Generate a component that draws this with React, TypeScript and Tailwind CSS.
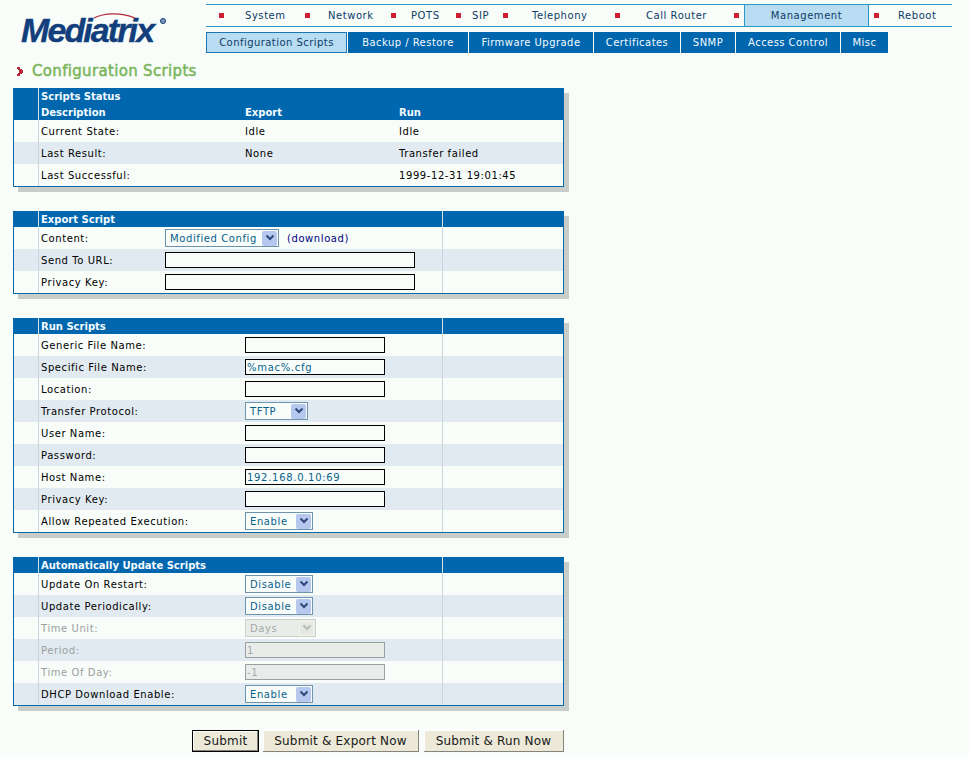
import type { ReactNode } from "react";

function TopItem({ width, pad, label }: { width: string; pad: string; label: string }) {
  return (
    <div className={`flex items-center ${width}`}>
      <span className="w-[5px] h-[5px] bg-[#d01c30] shrink-0" />
      <span className={`${pad} text-[#0d3b66]`}>{label}</span>
    </div>
  );
}

function SubTab({ width, label, active }: { width: string; label: string; active?: boolean }) {
  return (
    <div
      className={
        active
          ? `${width} h-[21px] flex items-center justify-center bg-[#b8dcf2] border border-[#1d75b5] text-[#0d3b66]`
          : `${width} h-[21px] flex items-center justify-center bg-[#0066ae] text-[#f4fbff]`
      }
    >
      {label}
    </div>
  );
}

function Panel({ children }: { children: ReactNode }) {
  return (
    <div className="w-[551px] mb-6 border-x border-b border-[#0a6aa6] shadow-[5px_5px_0_0_#c9cdc9]">
      {children}
    </div>
  );
}

function PanelHead({ title }: { title: string }) {
  return (
    <div className="flex h-4 -mx-px bg-[#0066ae] font-bold text-[#f4fbff]">
      <div className="w-[26px] border-r border-[#d5e2ea]" />
      <div className="w-[404px] pl-[2px] pt-px leading-4 border-r border-[#d5e2ea]">{title}</div>
    </div>
  );
}

function Row({ label, odd, muted, children }: { label: string; odd?: boolean; muted?: boolean; children?: ReactNode }) {
  return (
    <div className={odd ? "flex h-[22px] bg-[#e1eaf0]" : "flex h-[22px]"}>
      <div className="w-[25px] border-r border-[#c9d6de]" />
      <div className="w-[404px] flex items-center border-r border-[#c9d6de]">
        <div className={muted ? "w-[206px] pl-[2px] pt-px text-[#9a9f9f]" : "w-[206px] pl-[2px] pt-px text-black"}>{label}</div>
        {children}
      </div>
    </div>
  );
}

function Input({ value = "", disabled }: { value?: string; disabled?: boolean }) {
  return (
    <input
      readOnly
      disabled={disabled}
      value={value}
      className={
        disabled
          ? "w-[140px] h-4 px-px pt-px border border-[#9a9f9f] bg-[#e9edea] text-[#a4a8a8] text-[10px] tracking-[0.7px] outline-none"
          : "w-[140px] h-4 px-px pt-px border border-black bg-[#f8fdfa] text-[#0a5f8a] text-[10px] tracking-[0.7px] outline-none"
      }
    />
  );
}

function Arrow({ disabled }: { disabled?: boolean }) {
  return (
    <span
      className={
        disabled
          ? "w-[15px] h-[15px] mr-px flex items-center justify-center bg-[#e6e8e2] border border-[#f2f3ee]"
          : "w-[15px] h-[15px] mr-px flex items-center justify-center bg-[#b7c8ee] rounded-[2px]"
      }
    >
      <svg width="10" height="8" viewBox="0 0 10 8">
        <path d="M1.5 1.5 L5 5 L8.5 1.5" fill="none" stroke={disabled ? "#b8bcb4" : "#2c4a7c"} strokeWidth="2" />
      </svg>
    </span>
  );
}

function Select({ width, value, disabled }: { width: string; value: string; disabled?: boolean }) {
  return (
    <div
      className={
        disabled
          ? `${width} h-[18px] flex items-center justify-between border border-[#cfd0c8] bg-[#e9edea] text-[#a4a8a8] tracking-[0.6px]`
          : `${width} h-[18px] flex items-center justify-between border border-[#6e94ad] bg-[#f8fdfa] text-[#0a5f8a] tracking-[0.6px]`
      }
    >
      <span className="pl-1 pt-px">{value}</span>
      <Arrow disabled={disabled} />
    </div>
  );
}

function Logo() {
  return (
    <div className="relative w-[206px] h-[46px] pl-[21px] pt-[7px]">
      <svg className="absolute left-[92px] top-[8px]" width="46" height="8" viewBox="0 0 46 8">
        <path d="M2 6 C12 1 28 0 43 6" fill="none" stroke="#b5283c" strokeWidth="1.3" />
      </svg>
      <span
        className="font-bold italic text-[#123f7c] text-[34px] leading-[38px] tracking-[-1.9px] [-webkit-text-stroke:0.4px_#123f7c]"
        style={{ fontFamily: '"Liberation Sans", Arial, sans-serif' }}
      >
        Mediatrix
      </span>
      <span className="absolute left-[160px] top-[14px] w-[6px] h-[6px] rounded-full border border-[#123f7c] bg-[#7e97b8]" />
    </div>
  );
}

const statusRows = [
  ["Current State:", "Idle", "Idle"],
  ["Last Result:", "None", "Transfer failed"],
  ["Last Successful:", "", "1999-12-31 19:01:45"],
];

export default function App() {
  return (
    <div
      className="h-[757px] overflow-hidden bg-[#f8fdfa] text-[10px] leading-none"
      style={{ fontFamily: '"DejaVu Sans", Verdana, sans-serif' }}
    >
      {/* Header */}
      <div className="flex pt-1">
        <Logo />
        <div className="flex flex-col gap-[5px]">
          <div className="w-[746px] h-[23px] flex pl-[13px] border-y border-[#2a9ac4] tracking-[0.55px]">
            <TopItem width="w-[86px]" pad="pl-[21px]" label="System" />
            <TopItem width="w-[86px]" pad="pl-[18px]" label="Network" />
            <TopItem width="w-[65px]" pad="pl-[15px]" label="POTS" />
            <TopItem width="w-[47px]" pad="pl-[11px]" label="SIP" />
            <TopItem width="w-[112px]" pad="pl-[24px]" label="Telephony" />
            <TopItem width="w-[119px]" pad="pl-[26px]" label="Call Router" />
            <TopItem width="w-[10px]" pad="" label="" />
            <div className="w-[125px] flex items-center justify-center bg-[#b8dcf2] border-x border-[#2a9ac4] text-[#0d3b66]">
              Management
            </div>
            <TopItem width="w-[70px] ml-[5px]" pad="pl-[19px]" label="Reboot" />
          </div>
          <div className="flex gap-px tracking-[0.45px]">
            <SubTab width="w-[141px]" label="Configuration Scripts" active />
            <SubTab width="w-[120px]" label="Backup / Restore" />
            <SubTab width="w-[124px]" label="Firmware Upgrade" />
            <SubTab width="w-[86px]" label="Certificates" />
            <SubTab width="w-[54px]" label="SNMP" />
            <SubTab width="w-[104px]" label="Access Control" />
            <SubTab width="w-[47px]" label="Misc" />
          </div>
        </div>
      </div>

      {/* Title */}
      <div className="flex items-center h-4 mt-[10px] mb-[9px] pl-[17px]">
        <svg width="6" height="9" viewBox="0 0 6 9" shapeRendering="crispEdges">
          <path d="M0 0H3V2H5V3H6V6H5V7H3V9H0V7H1V6H2V3H1V2H0Z" fill="#b5283c" />
        </svg>
        <h1 className="pl-[9px] text-[15px] tracking-[0.33px] text-[#7ab55a] [-webkit-text-stroke:0.5px_#7ab55a]">
          Configuration Scripts
        </h1>
      </div>

      <div className="pl-[13px]">
        {/* Scripts Status */}
        <Panel>
          <div className="flex h-8 -mx-px bg-[#0066ae] font-bold text-[#f4fbff]">
            <div className="w-[26px] border-r border-[#d5e2ea]" />
            <div className="flex-1 pl-[2px] pt-px">
              <div className="h-4 leading-4">Scripts Status</div>
              <div className="flex h-[15px] leading-4">
                <div className="w-[204px]">Description</div>
                <div className="w-[154px]">Export</div>
                <div>Run</div>
              </div>
            </div>
          </div>
          {statusRows.map(([label, exp, run], i) => (
            <div
              key={label}
              className={
                i === 1
                  ? "flex h-[22px] items-center bg-[#e1eaf0] tracking-[0.58px]"
                  : "flex h-[22px] items-center tracking-[0.58px]"
              }
            >
              <div className="w-[25px] h-full border-r border-[#c9d6de]" />
              <div className="w-[206px] pl-[2px] pt-px">{label}</div>
              <div className="w-[154px] pt-px">{exp}</div>
              <div className="pt-px">{run}</div>
            </div>
          ))}
        </Panel>

        {/* Export Script */}
        <Panel>
          <PanelHead title="Export Script" />
          <div className="flex h-[22px] tracking-[0.58px]">
            <div className="w-[25px] border-r border-[#c9d6de]" />
            <div className="w-[404px] flex items-center border-r border-[#c9d6de]">
              <div className="w-[126px] pl-[2px] pt-px">Content:</div>
              <Select width="w-[114px]" value="Modified Config" />
              <span className="pl-2 pt-px text-[#000080]">(download)</span>
            </div>
          </div>
          <div className="flex h-[22px] bg-[#e1eaf0] tracking-[0.58px]">
            <div className="w-[25px] border-r border-[#c9d6de]" />
            <div className="w-[404px] flex items-center border-r border-[#c9d6de]">
              <div className="w-[126px] pl-[2px] pt-px">Send To URL:</div>
              <input readOnly className="w-[250px] h-4 border border-black bg-[#f8fdfa] outline-none" />
            </div>
          </div>
          <div className="flex h-[22px] tracking-[0.58px]">
            <div className="w-[25px] border-r border-[#c9d6de]" />
            <div className="w-[404px] flex items-center border-r border-[#c9d6de]">
              <div className="w-[126px] pl-[2px] pt-px">Privacy Key:</div>
              <input readOnly className="w-[250px] h-4 border border-black bg-[#f8fdfa] outline-none" />
            </div>
          </div>
        </Panel>

        {/* Run Scripts */}
        <Panel>
          <PanelHead title="Run Scripts" />
          <div className="tracking-[0.58px]">
            <Row label="Generic File Name:"><Input /></Row>
            <Row label="Specific File Name:" odd><Input value="%mac%.cfg" /></Row>
            <Row label="Location:"><Input /></Row>
            <Row label="Transfer Protocol:" odd><Select width="w-[63px]" value="TFTP" /></Row>
            <Row label="User Name:"><Input /></Row>
            <Row label="Password:" odd><Input /></Row>
            <Row label="Host Name:"><Input value="192.168.0.10:69" /></Row>
            <Row label="Privacy Key:" odd><Input /></Row>
            <Row label="Allow Repeated Execution:"><Select width="w-[68px]" value="Enable" /></Row>
          </div>
        </Panel>

        {/* Automatically Update Scripts */}
        <Panel>
          <PanelHead title="Automatically Update Scripts" />
          <div className="tracking-[0.58px]">
            <Row label="Update On Restart:"><Select width="w-[68px]" value="Disable" /></Row>
            <Row label="Update Periodically:" odd><Select width="w-[68px]" value="Disable" /></Row>
            <Row label="Time Unit:" muted><Select width="w-[71px]" value="Days" disabled /></Row>
            <Row label="Period:" odd muted><Input value="1" disabled /></Row>
            <Row label="Time Of Day:" muted><Input value="-1" disabled /></Row>
            <Row label="DHCP Download Enable:" odd><Select width="w-[68px]" value="Enable" /></Row>
          </div>
        </Panel>

        {/* Buttons */}
        <div className="flex w-[551px] justify-end text-[12px] tracking-[0.2px] text-[#1a1a1a]">
          <button className="w-[67px] h-[22px] bg-[#ece9d8] border border-black shadow-[inset_-1px_-1px_0_#85847c,inset_1px_1px_0_#ffffff]">
            Submit
          </button>
          <button className="w-[156px] h-[22px] ml-1 bg-[#ece9d8] border-r border-b border-[#85847c] shadow-[inset_1px_1px_0_#ffffff]">
            Submit &amp; Export Now
          </button>
          <button className="w-[140px] h-[22px] ml-[5px] bg-[#ece9d8] border-r border-b border-[#85847c] shadow-[inset_1px_1px_0_#ffffff]">
            Submit &amp; Run Now
          </button>
        </div>
      </div>
    </div>
  );
}
